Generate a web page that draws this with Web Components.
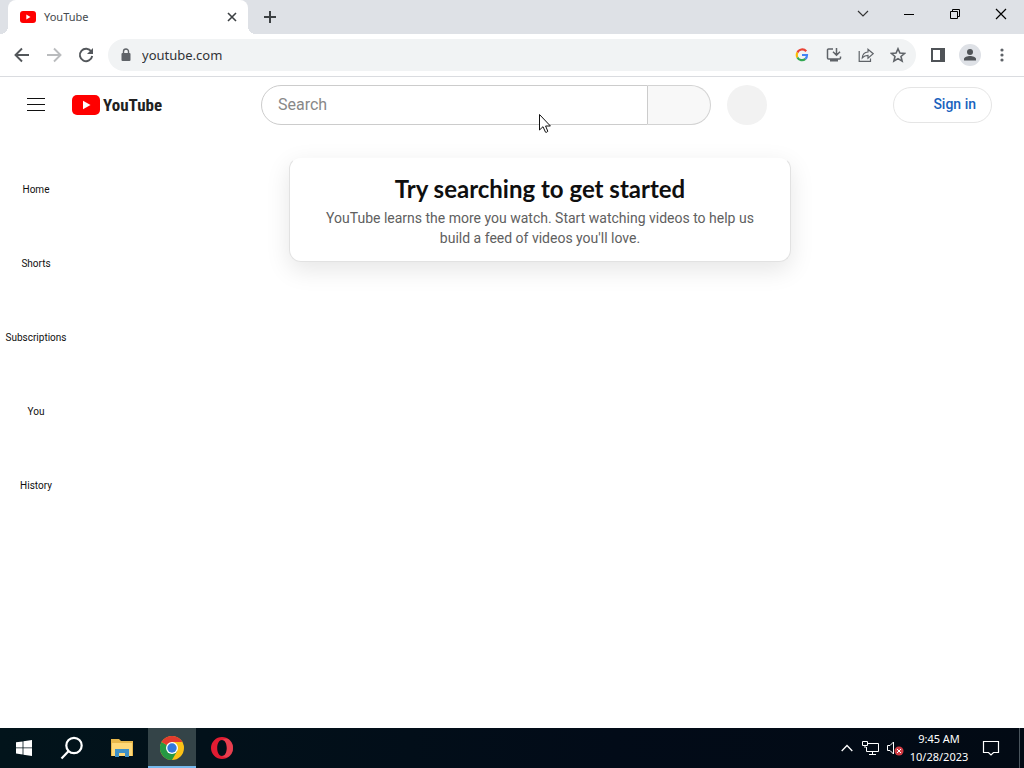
<!DOCTYPE html>
<html lang="en">
<head>
<meta charset="utf-8">
<title>YouTube</title>
<style>
html, body { height: 100%; margin: 0; }
body { font-family: Roboto, "Liberation Sans", sans-serif; background: #fff; }
</style>
</head>
<body>
<desktop-screen></desktop-screen>
<script>
const base = `<style>
*, *::before, *::after { box-sizing: border-box; }
:host { display: block; }
button, input { font: inherit; margin: 0; padding: 0; border: 0; background: none; color: inherit; }
a { color: inherit; text-decoration: none; }
svg { display: block; flex: none; }
</style>`;

function define(name, html) {
  const tpl = document.createElement('template');
  tpl.innerHTML = base + html;
  customElements.define(name, class extends HTMLElement {
    constructor() {
      super();
      this.attachShadow({ mode: 'open' }).append(tpl.content.cloneNode(true));
    }
  });
}

define('desktop-screen', `<style>
:host { display: flex; flex-direction: column; min-height: 100%; height: 100%; position: relative; overflow: hidden; }
yt-page { flex: 1; }
.cursor { position: absolute; left: 539px; top: 114px; pointer-events: none; }
</style>
<browser-tabs></browser-tabs>
<browser-toolbar></browser-toolbar>
<yt-page></yt-page>
<task-bar></task-bar>
<svg class="cursor" width="13" height="20" viewBox="0 0 13 20"><path d="M.5.5v15.500l3.500-3.300 2.500 5.500q1.300.6 2.300-.9L6.600 12h4.800z" fill="#fff" stroke="#111"/></svg>`);

define('browser-tabs', `<style>
:host { background: #dee1e6; height: 34px; font: 11px/16px "Noto Sans", sans-serif; color: #45494d; }
.strip { display: flex; height: 100%; padding-left: 8px; }
.tab { display: flex; align-items: center; width: 240px; background: #fff; border-radius: 8px 8px 0 0; padding: 0 8px 0 12px; gap: 8px; position: relative; }
.tab::before, .tab::after { content: ""; position: absolute; bottom: 0; width: 8px; height: 8px; }
.tab::before { left: -8px; background: radial-gradient(circle at 0 0, transparent 8px, #fff 8px); }
.tab::after { right: -8px; background: radial-gradient(circle at 100% 0, transparent 8px, #fff 8px); }
.tab span { flex: 1; }
button { display: grid; place-items: center; }
.tab button { width: 16px; height: 16px; }
.new { width: 28px; margin-left: 8px; }
.controls { display: flex; margin-left: auto; height: 28px; }
.controls button { width: 46px; }
</style>
<div class="strip">
  <div class="tab">
    <svg width="16" height="16" viewBox="0 0 16 16"><rect y="2" width="16" height="12" rx="3" fill="#f00"/><path d="M6.300 5.500v5L10.500 8z" fill="#fff"/></svg>
    <span>YouTube</span>
    <button aria-label="Close tab"><svg width="10" height="10" viewBox="0 0 10 10"><path d="M1 1l8 8M9 1L1 9" stroke="#3c4043" stroke-width="1.600"/></svg></button>
  </div>
  <button class="new" aria-label="New tab"><svg width="14" height="14" viewBox="0 0 14 14"><path d="M7 1v12M1 7h12" stroke="#3c4043" stroke-width="2"/></svg></button>
  <div class="controls">
    <button aria-label="Search tabs"><svg width="12" height="12" viewBox="0 0 12 12"><path d="M1 3l5 5 5-5" fill="none" stroke="#333" stroke-width="1.200"/></svg></button>
    <button aria-label="Minimize"><svg width="10" height="10" viewBox="0 0 10 10"><path d="M0 5.500h10" stroke="#000"/></svg></button>
    <button aria-label="Restore"><svg width="10" height="10" viewBox="0 0 10 10"><path d="M.5 2.500h7v7h-7zM2.500 2V.5h7v7H8" fill="none" stroke="#000"/></svg></button>
    <button aria-label="Close"><svg width="12" height="12" viewBox="0 0 12 12"><path d="M1 1l10 10M11 1L1 11" stroke="#000" stroke-width="1.200"/></svg></button>
  </div>
</div>`);

define('browser-toolbar', `<style>
:host { height: 43px; border-bottom: 1px solid #dadce0; background: #fff; color: #5f6368; }
.bar { display: flex; align-items: center; height: 100%; padding: 0 6px; }
button { width: 32px; height: 32px; display: grid; place-items: center; flex: none; }
.address { flex: 1; min-width: 0; display: flex; align-items: center; height: 32px; margin: 0 6px; padding: 0 2px 0 10px; border-radius: 16px; background: #f1f3f4; }
input { flex: 1; min-width: 0; margin-left: 8px; font: 13px/20px "Noto Sans", sans-serif; color: #303236; outline: 0; }
.avatar span { width: 22px; height: 22px; border-radius: 50%; background: #dee1e6; display: grid; place-items: center; }
</style>
<div class="bar">
  <button aria-label="Back"><svg width="16" height="16" viewBox="0 0 16 16"><path d="M15 8H2M8 1.500L1.500 8 8 14.500" fill="none" stroke="#53575b" stroke-width="1.900"/></svg></button>
  <button aria-label="Forward"><svg width="16" height="16" viewBox="0 0 16 16"><path d="M1 8h13M8 1.500L14.500 8 8 14.500" fill="none" stroke="#babcbe" stroke-width="1.900"/></svg></button>
  <button aria-label="Reload"><svg width="16" height="16" viewBox="0 0 16 16"><path d="M13.300 4.600A6.200 6.200 0 1 0 14.200 9" fill="none" stroke="#53575b" stroke-width="1.900"/><path d="M15 1v6H9z" fill="#53575b"/></svg></button>
  <div class="address">
    <svg width="16" height="16" viewBox="0 0 16 16"><rect x="3.500" y="6" width="9" height="8" rx="1" fill="#5f6368"/><path d="M5.500 6V4.500a2.500 2.500 0 0 1 5 0V6" fill="none" stroke="#5f6368" stroke-width="1.400"/></svg>
    <input aria-label="Address and search bar" value="youtube.com">
    <button aria-label="Search with Google"><svg width="14" height="14" viewBox="0 0 14 14" fill="none" stroke-width="2.200"><path d="M11.200 3.300A5.200 5.200 0 0 0 2.400 4.600" stroke="#ea4335"/><path d="M2.400 4.600a5.200 5.200 0 0 0 0 4.800" stroke="#fbbc05"/><path d="M2.400 9.400a5.200 5.200 0 0 0 8 1.500" stroke="#34a853"/><path d="M10.400 10.900A5.200 5.200 0 0 0 12 7H7" stroke="#4285f4"/></svg></button>
    <button aria-label="Install YouTube"><svg width="16" height="16" viewBox="0 0 16 16"><path d="M7 2H2.500a1 1 0 0 0-1 1v8a1 1 0 0 0 1 1h11a1 1 0 0 0 1-1V9.500M10.500 1v6.500M7 4.800l3.500 3.500L14 4.800" fill="none" stroke="#5f6368" stroke-width="1.500"/><path d="M4 12h8v2.500H4z" fill="#5f6368"/></svg></button>
    <button aria-label="Share this page"><svg width="16" height="16" viewBox="0 0 16 16"><path d="M1.200 4v10.300h11.300V11.500M4.300 10.800C4.600 7.200 6.700 5.300 10 5V2.200l5.200 4.500L10 11.200V8.400c-2.500 0-4.200.8-5.700 2.400z" fill="none" stroke="#5f6368" stroke-width="1.200"/></svg></button>
    <button aria-label="Bookmark this tab"><svg width="16" height="16" viewBox="0 0 16 16"><path d="M8 1.800l1.900 4.300 4.600.4L11 9.500l1.100 4.600L8 11.600l-4.100 2.500L5 9.500 1.500 6.500l4.600-.4z" fill="none" stroke="#5f6368" stroke-width="1.600"/></svg></button>
  </div>
  <button aria-label="Side panel"><svg width="14" height="14" viewBox="0 0 14 14"><path d="M1 1h12v12H1z" fill="none" stroke="#4f5357" stroke-width="2"/><path d="M9 1h4v12H9z" fill="#4f5357"/></svg></button>
  <button class="avatar" aria-label="Profile"><span><svg width="14" height="14" viewBox="0 0 14 14" fill="#4f5357"><circle cx="7" cy="4" r="3"/><path d="M1 12.500V11c0-2 3.500-3 6-3s6 1 6 3v1.500z"/></svg></span></button>
  <button aria-label="Menu"><svg width="4" height="14" viewBox="0 0 4 14" fill="#5f6368"><circle cx="2" cy="2" r="1.600"/><circle cx="2" cy="7" r="1.600"/><circle cx="2" cy="12" r="1.600"/></svg></button>
</div>`);

define('yt-page', `<style>
:host { background: #fff; padding-right: 16px; }
.body { display: flex; }
yt-guide { flex: 0 0 72px; }
main { flex: 1; min-width: 0; padding-top: 24px; }
</style>
<yt-masthead></yt-masthead>
<div class="body">
  <yt-guide></yt-guide>
  <main>
    <yt-nudge><span slot="title">Try searching to get started</span>YouTube learns the more you watch. Start watching videos to help us build a feed of videos you'll love.</yt-nudge>
  </main>
</div>`);

define('yt-masthead', `<style>
header { display: flex; align-items: center; height: 56px; padding: 0 16px; }
.start { flex: 1; display: flex; align-items: center; }
.menu { width: 40px; height: 40px; display: grid; place-items: center; margin-right: 16px; }
.logo { display: flex; align-items: center; gap: 3px; font: bold 17px/24px "Liberation Sans Narrow", "Roboto Condensed", "Open Sans Condensed", Roboto, sans-serif; color: #212121; }
.center { flex: 0 1 506px; display: flex; }
form { flex: 1; display: flex; min-width: 0; }
input { flex: 1; min-width: 0; height: 40px; border: 1px solid #ccc; border-radius: 20px 0 0 20px; padding: 0 16px 2px; font-size: 16px; line-height: 24px; }
input::placeholder { color: #888; opacity: 1; }
.go { width: 63px; height: 40px; border: 1px solid #d3d3d3; border-left: 0; border-radius: 0 20px 20px 0; background: #f8f8f8; }
.voice { width: 40px; height: 40px; border-radius: 50%; background: #f2f2f2; margin-left: 16px; flex: none; }
.end { flex: 0 0 225px; display: flex; justify-content: flex-end; }
.sign { height: 36px; border: 1px solid #e5e5e5; border-radius: 18px; padding: 0 15px 0 39px; font-size: 14px; font-weight: 500; line-height: 32px; color: #1a62bd; }
</style>
<header>
  <div class="start">
    <button class="menu" aria-label="Guide"><svg width="18" height="14" viewBox="0 0 18 14"><path d="M0 .5h18M0 6.500h18M0 12.500h18" stroke="#111"/></svg></button>
    <a class="logo" href="#"><svg width="28" height="20" viewBox="0 0 28 20"><rect width="28" height="20" rx="5" fill="#f00"/><path d="M11 5.700v8.600l7.500-4.300z" fill="#fff"/></svg><span>YouTube</span></a>
  </div>
  <div class="center">
    <form role="search"><input type="text" placeholder="Search" aria-label="Search"><button class="go" type="button" aria-label="Search"></button></form>
    <button class="voice" aria-label="Search with your voice"></button>
  </div>
  <div class="end"><a class="sign" href="#">Sign in</a></div>
</header>`);

define('yt-guide', `<style>
nav { display: flex; flex-direction: column; padding-top: 4px; }
a { height: 74px; padding-top: 46px; text-align: center; font-size: 10px; line-height: 14px; color: #0f0f0f; }
</style>
<nav><a href="#">Home</a><a href="#">Shorts</a><a href="#">Subscriptions</a><a href="#">You</a><a href="#">History</a></nav>`);

define('yt-nudge', `<style>
section { max-width: 502px; margin: 0 auto; padding: 15px 32px 13px; text-align: center; background: #fff; border: 1px solid #e2e2e2; border-top-color: #fafafa; border-radius: 12px; box-shadow: 0 8px 24px rgba(0,0,0,.1); }
h1 { margin: 0 0 3px; font: bold 24px/32px Lato, sans-serif; color: #0f0f0f; }
p { margin: 0; font-size: 14px; line-height: 20px; color: #606060; }
</style>
<section><h1><slot name="title"></slot></h1><p><slot></slot></p></section>`);

define('task-bar', `<style>
:host { height: 40px; background: linear-gradient(90deg, #02141b, #020b18 60%, #020a14); color: #fff; }
.bar { display: flex; height: 100%; }
button { display: grid; place-items: center; height: 40px; width: 48px; }
.wide { width: 52px; }
.active { background: #344448; box-shadow: inset 0 -2px #76b9ed; }
.tray { display: flex; margin-left: auto; }
.tray .small { width: 24px; }
.tray .clock { width: 64px; font: 11px/18px "Noto Sans", sans-serif; display: block; text-align: center; white-space: nowrap; }
.tray .notes { width: 40px; margin-right: 4px; }
.show { width: 9px; }
.tray .show { width: 9px; justify-items: start; padding-left: 4px; }
.show::before { content: ""; width: 1px; height: 40px; background: #4a555d; }
</style>
<div class="bar">
  <button aria-label="Start"><svg width="16" height="16" viewBox="0 0 16 16" fill="#fff"><path d="M0 2.300l6.600-.9v6.100H0zM7.400 1.300L16 0v7.500H7.400zM0 8.300h6.600v6.200L0 13.600zM7.400 8.300H16V16l-8.600-1.300z"/></svg></button>
  <button aria-label="Search"><svg width="24" height="24" viewBox="0 0 24 24" fill="none" stroke="#fff" stroke-width="2.200"><circle cx="14" cy="9.500" r="7.700"/><path d="M8.700 15L1.500 22.500"/></svg></button>
  <button class="wide" aria-label="File Explorer"><svg width="22" height="20" viewBox="0 0 22 20"><path d="M0 1h8l2 2h12v15H0z" fill="#e8b84b"/><path d="M1 5h20v13H1z" fill="#ffd978"/><path d="M4 11h14v8h-4v-4H8v4H4z" fill="#3f91c7"/></svg></button>
  <button class="active" aria-label="Google Chrome"><svg width="24" height="24" viewBox="0 0 24 24"><circle cx="12" cy="12" r="12" fill="#fbc116"/><path d="M1.600 6A12 12 0 0 0 12 24l5.200-9L12 12z" fill="#269943"/><path d="M12 12L1.600 6A12 12 0 0 1 22.400 6H12z" fill="#e33b2e"/><circle cx="12" cy="12" r="6" fill="#fff"/><circle cx="12" cy="12" r="4.700" fill="#3278dc"/></svg></button>
  <button class="wide" aria-label="Opera"><svg width="22" height="22" viewBox="0 0 22 22"><path d="M11 0a11 11 0 1 0 0 22 11 11 0 0 0 0-22zm0 3c2.800 0 4.800 3.500 4.800 8s-2 8-4.800 8-4.800-3.500-4.800-8 2-8 4.800-8z" fill="#e21c32" fill-rule="evenodd"/><path d="M11 3c3-2 6-1.500 7.500-.3A11 11 0 0 1 18.500 19.300C16.500 20.800 13.500 21 11 19c3 0 4.800-3.500 4.800-8S14 3 11 3z" fill="#f0606a" opacity=".5"/></svg></button>
  <div class="tray">
    <button class="small" aria-label="Show hidden icons"><svg width="12" height="8" viewBox="0 0 12 8"><path d="M.7 7L6 1.500 11.300 7" fill="none" stroke="#fff" stroke-width="1.300"/></svg></button>
    <button class="small" aria-label="Network"><svg width="18" height="16" viewBox="0 0 18 16" fill="none" stroke="#fff"><path d="M6 3.500h10.500v8H4.500V7M10.500 11.500v3M7 14.500h7M.5 1.500h5v4h-5zM3 5.500V8"/></svg></button>
    <button class="small" aria-label="Volume"><svg width="18" height="16" viewBox="0 0 18 16"><path d="M1.500 5.500H4L7.500 2v12L4 10.500H1.500z" fill="none" stroke="#fff"/><circle cx="13" cy="11" r="4.500" fill="#d33c44"/><path d="M11 9l4 4M15 9l-4 4" stroke="#fff"/></svg></button>
    <button class="clock" aria-label="Clock">9:45 AM<br>10/28/2023</button>
    <button class="notes" aria-label="Notifications"><svg width="18" height="18" viewBox="0 0 18 18"><path d="M1.500 2.500h15v11h-5L9 16l-2.500-2.500h-5z" fill="none" stroke="#fff" stroke-width="1.200"/></svg></button>
    <button class="show" aria-label="Show desktop"></button>
  </div>
</div>`);
</script>
</body>
</html>
